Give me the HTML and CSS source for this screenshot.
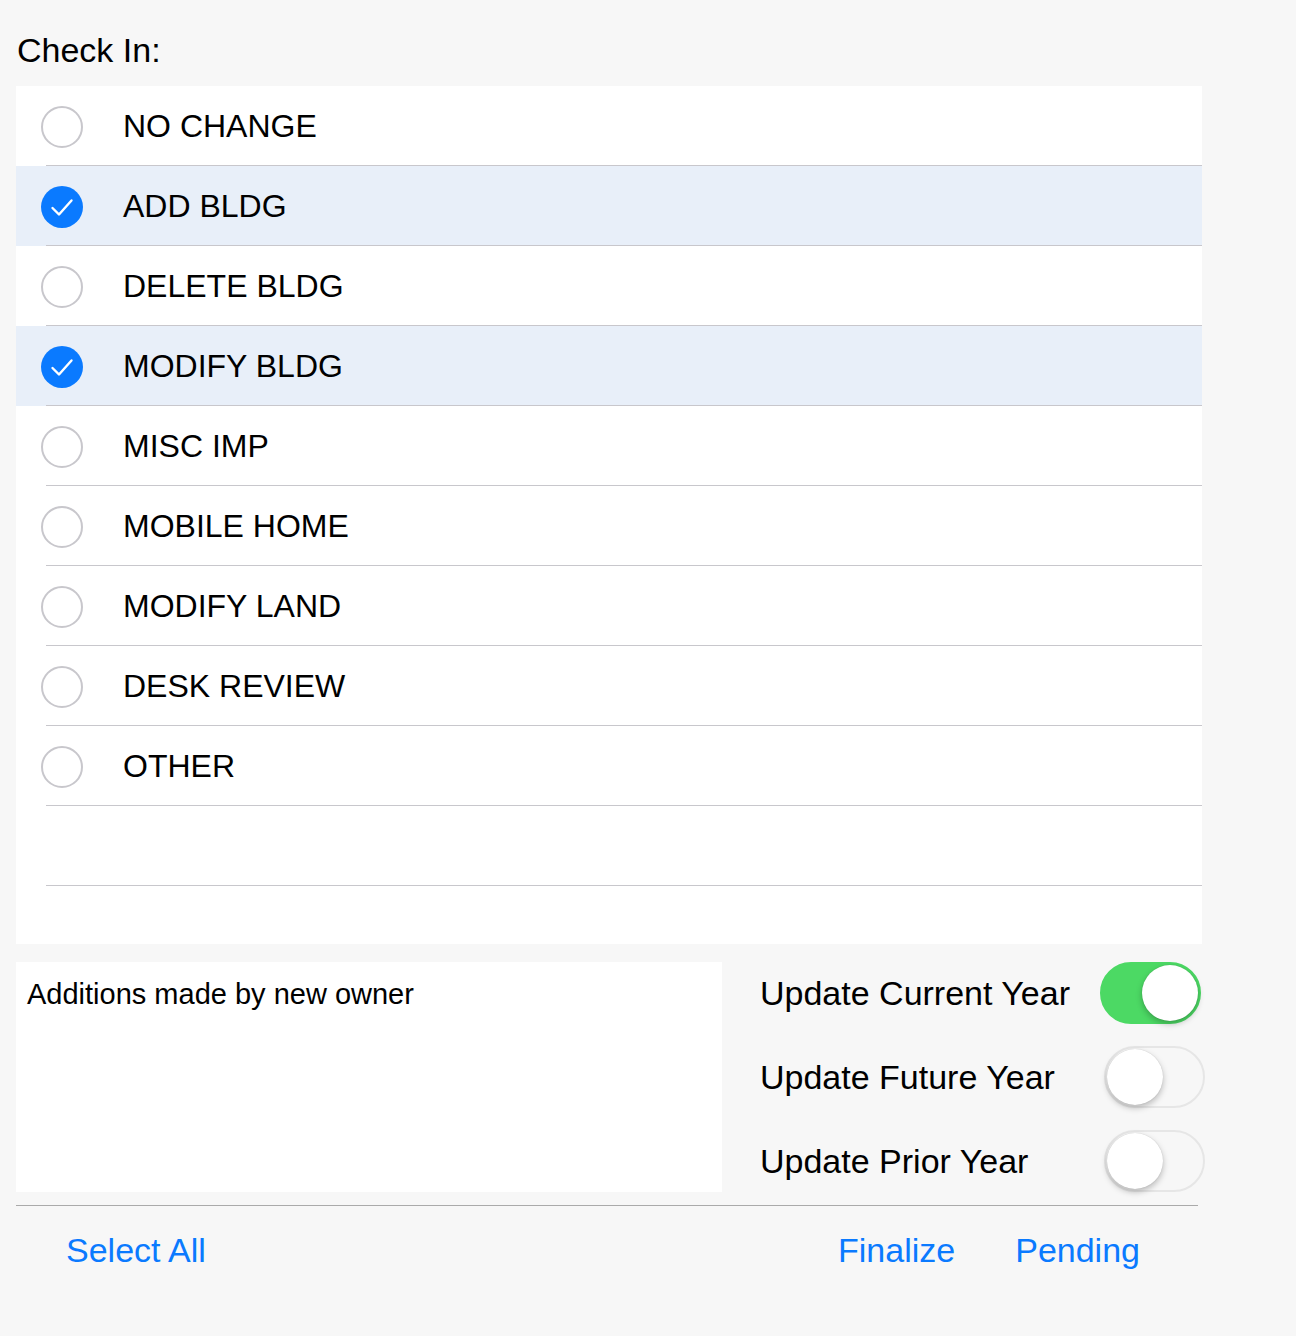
FILE: index.html
```html
<!DOCTYPE html>
<html lang="en">

<head>
  <meta charset="UTF-8" />
  <meta name="viewport" content="width=device-width, initial-scale=1.0" />
  <title>Check In</title>
  <link rel="stylesheet" href="styles.css">
</head>

<body>
  <div class="screen">
    <div class="section-title">Check In:</div>

    <div class="list">
      <div class="row">
        <div class="row-main"><span class="radio"></span><span class="label">NO CHANGE</span></div>
        <div class="row-line"></div>
      </div>
      <div class="row selected">
        <div class="row-main"><span class="radio checked"><svg viewBox="0 0 42 42" width="42" height="42"><path d="M11.5 22 L18 28.5 L30.5 14.5" fill="none" stroke="#fff" stroke-width="2.4" stroke-linecap="round" stroke-linejoin="round"/></svg></span><span class="label">ADD BLDG</span></div>
        <div class="row-line"></div>
      </div>
      <div class="row">
        <div class="row-main"><span class="radio"></span><span class="label">DELETE BLDG</span></div>
        <div class="row-line"></div>
      </div>
      <div class="row selected">
        <div class="row-main"><span class="radio checked"><svg viewBox="0 0 42 42" width="42" height="42"><path d="M11.5 22 L18 28.5 L30.5 14.5" fill="none" stroke="#fff" stroke-width="2.4" stroke-linecap="round" stroke-linejoin="round"/></svg></span><span class="label">MODIFY BLDG</span></div>
        <div class="row-line"></div>
      </div>
      <div class="row">
        <div class="row-main"><span class="radio"></span><span class="label">MISC IMP</span></div>
        <div class="row-line"></div>
      </div>
      <div class="row">
        <div class="row-main"><span class="radio"></span><span class="label">MOBILE HOME</span></div>
        <div class="row-line"></div>
      </div>
      <div class="row">
        <div class="row-main"><span class="radio"></span><span class="label">MODIFY LAND</span></div>
        <div class="row-line"></div>
      </div>
      <div class="row">
        <div class="row-main"><span class="radio"></span><span class="label">DESK REVIEW</span></div>
        <div class="row-line"></div>
      </div>
      <div class="row">
        <div class="row-main"><span class="radio"></span><span class="label">OTHER</span></div>
        <div class="row-line"></div>
      </div>
      <div class="row empty">
        <div class="row-main"></div>
        <div class="row-line"></div>
      </div>
    </div>

    <div class="bottom">
      <div class="notes">Additions made by new owner</div>
      <div class="options">
        <div class="option">
          <span class="option-label">Update Current Year</span>
          <span class="switch on"><span class="knob"></span></span>
        </div>
        <div class="option">
          <span class="option-label">Update Future Year</span>
          <span class="switch"><span class="knob"></span></span>
        </div>
        <div class="option">
          <span class="option-label">Update Prior Year</span>
          <span class="switch"><span class="knob"></span></span>
        </div>
      </div>
    </div>

    <div class="toolbar">
      <button class="link">Select All</button>
      <div class="toolbar-right">
        <button class="link">Finalize</button>
        <button class="link">Pending</button>
      </div>
    </div>
  </div>
</body>

</html>
```

FILE: styles.css
```css
* {
  box-sizing: border-box;
}

body {
  margin: 0;
  background: #f7f7f7;
  font-family: "Liberation Sans", Arial, sans-serif;
  color: #000;
}

.screen {
  width: 1296px;
  height: 1336px;
  padding: 0 16px;
}

.section-title {
  padding-top: 31px;
  height: 86px;
  padding-left: 1px;
  font-size: 34px;
  line-height: 38px;
}

.list {
  width: 1186px;
  background: #fff;
  padding-bottom: 58px;
}

.row-main {
  height: 79px;
  display: flex;
  align-items: center;
  padding-left: 25px;
}

.row-line {
  height: 1px;
  margin-left: 30px;
  background: #c8c7cc;
}

.row.selected {
  background: #e8eff9;
}

.radio {
  width: 42px;
  height: 42px;
  border-radius: 50%;
  border: 2px solid #c8c7cc;
  flex-shrink: 0;
  margin-top: 2px;
}

.radio.checked {
  border: none;
  background: #0a7aff;
}

.radio svg {
  display: block;
}

.label {
  margin-left: 40px;
  font-size: 32px;
  line-height: 38px;
}

.bottom {
  display: flex;
  margin-top: 18px;
}

.notes {
  width: 706px;
  height: 230px;
  background: #fff;
  padding: 15px 11px;
  font-size: 29px;
  line-height: 34px;
}

.options {
  width: 483px;
  padding-left: 38px;
  display: flex;
  flex-direction: column;
  gap: 22px;
}

.option {
  display: flex;
  align-items: center;
  justify-content: space-between;
  height: 62px;
}

.option-label {
  font-size: 34px;
  line-height: 40px;
}

.switch {
  width: 101px;
  height: 62px;
  border-radius: 31px;
  border: 2px solid #e6e6e6;
  background: #f7f7f7;
  display: flex;
  align-items: center;
  padding: 0 1px;
}

.switch.on {
  background: #4cd964;
  border-color: #4cd964;
  justify-content: flex-end;
  margin-right: 4px;
}

.knob {
  width: 56px;
  height: 56px;
  border-radius: 50%;
  background: #fff;
  box-shadow: 0 3px 6px rgba(0, 0, 0, 0.25), 0 0 1px rgba(0, 0, 0, 0.2);
}

.toolbar {
  width: 1182px;
  margin-top: 13px;
  border-top: 1px solid #aaa;
  display: flex;
  justify-content: space-between;
  padding: 24px 58px 0 50px;
}

.toolbar-right {
  display: flex;
  gap: 60px;
}

button.link {
  background: none;
  border: none;
  padding: 0;
  font-family: inherit;
  font-size: 34px;
  line-height: 40px;
  color: #0a7aff;
  cursor: pointer;
}
```
